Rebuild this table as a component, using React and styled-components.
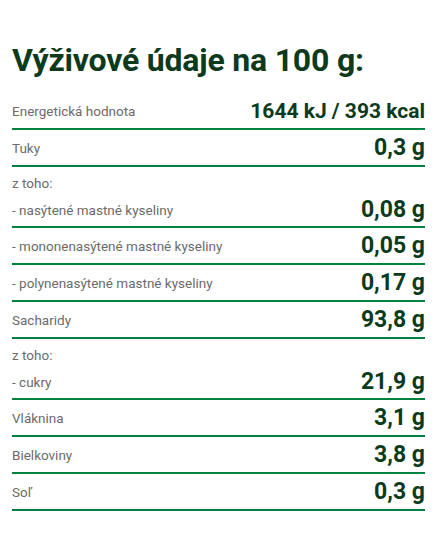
import React from "react";
import styled, { createGlobalStyle } from "styled-components";

const Global = createGlobalStyle`
  html, body { margin: 0; padding: 0; background: #fff; }
  body { font-family: Roboto, "Noto Sans", sans-serif; }
`;

const Wrap = styled.div`
  padding: 40px 13px 0 12px;
`;

const Title = styled.h2`
  margin: 0 0 13px;
  font-family: Roboto, sans-serif;
  font-weight: 700;
  font-size: 32px;
  line-height: 40px;
  color: #0b3a1c;
  letter-spacing: -0.2px;
`;

const Row = styled.div`
  display: flex;
  align-items: center;
  justify-content: space-between;
  height: 35px;
  border-bottom: 2px solid #00813e;
`;

const Group = styled.div`
  display: flex;
  flex-direction: column;
  border-bottom: 2px solid #00813e;
`;

const GroupHead = styled.div`
  height: 26px;
  display: flex;
  align-items: center;
  padding-top: 6px;
  box-sizing: border-box;
  font-size: 13.5px;
  color: #6b6b6b;
`;

const GroupRow = styled.div`
  display: flex;
  align-items: center;
  justify-content: space-between;
  height: 33px;
`;

const Label = styled.span`
  font-size: 13.5px;
  color: #6b6b6b;
`;

const Value = styled.span`
  font-weight: 700;
  font-size: ${(p) => (p.$small ? "21px" : "23px")};
  color: #0b3a1c;
`;

const rows = [
  { label: "Energetická hodnota", value: "1644 kJ / 393 kcal", small: true },
  { label: "Tuky", value: "0,3 g" },
  { group: "z toho:", label: "- nasýtené mastné kyseliny", value: "0,08 g" },
  { label: "- mononenasýtené mastné kyseliny", value: "0,05 g" },
  { label: "- polynenasýtené mastné kyseliny", value: "0,17 g" },
  { label: "Sacharidy", value: "93,8 g" },
  { group: "z toho:", label: "- cukry", value: "21,9 g" },
  { label: "Vláknina", value: "3,1 g" },
  { label: "Bielkoviny", value: "3,8 g" },
  { label: "Soľ", value: "0,3 g" },
];

export default function App() {
  return (
    <>
      <Global />
      <Wrap>
        <Title>Výživové údaje na 100 g:</Title>
        {rows.map((r, i) =>
          r.group ? (
            <Group key={i}>
              <GroupHead>{r.group}</GroupHead>
              <GroupRow>
                <Label>{r.label}</Label>
                <Value>{r.value}</Value>
              </GroupRow>
            </Group>
          ) : (
            <Row key={i}>
              <Label>{r.label}</Label>
              <Value $small={r.small}>{r.value}</Value>
            </Row>
          )
        )}
      </Wrap>
    </>
  );
}
